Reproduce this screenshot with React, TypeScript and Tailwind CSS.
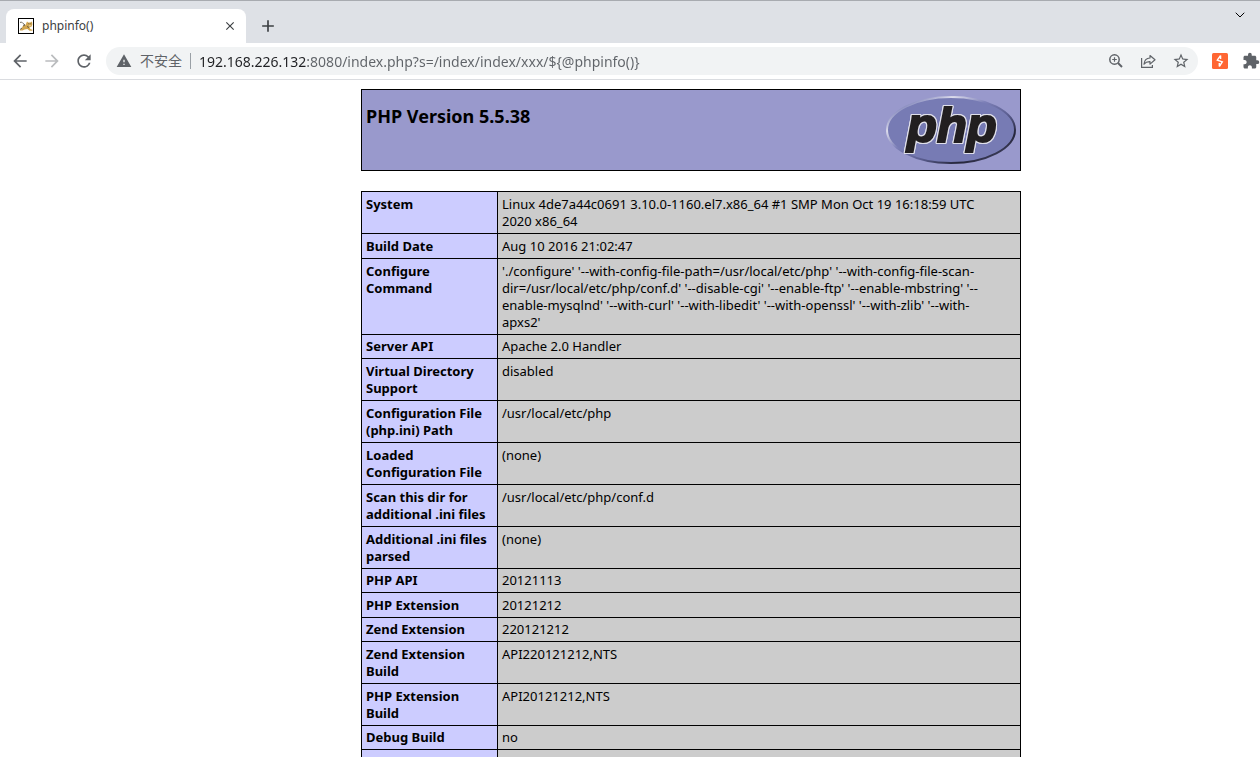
import { useState } from 'react'
import { ChevronDown } from 'lucide-react'
import {
  MdAdd, MdArrowBack, MdArrowForward, MdClose,
  MdExtension, MdRefresh, MdStarBorder, MdWarning,
} from 'react-icons/md'

interface InfoRow {
  name: string
  value: string
  compact?: boolean
}

const ROWS: InfoRow[] = [
  { name: 'System', value: 'Linux 4de7a44c0691 3.10.0-1160.el7.x86_64 #1 SMP Mon Oct 19 16:18:59 UTC\n2020 x86_64' },
  { name: 'Build Date', value: 'Aug 10 2016 21:02:47' },
  {
    name: 'Configure Command',
    value:
      "'./configure' '--with-config-file-path=/usr/local/etc/php' '--with-config-file-scan-\ndir=/usr/local/etc/php/conf.d' '--disable-cgi' '--enable-ftp' '--enable-mbstring' '--\nenable-mysqlnd' '--with-curl' '--with-libedit' '--with-openssl' '--with-zlib' '--with-\napxs2'",
  },
  { name: 'Server API', value: 'Apache 2.0 Handler', compact: true },
  { name: 'Virtual Directory Support', value: 'disabled' },
  { name: 'Configuration File (php.ini) Path', value: '/usr/local/etc/php' },
  { name: 'Loaded Configuration File', value: '(none)' },
  { name: 'Scan this dir for additional .ini files', value: '/usr/local/etc/php/conf.d' },
  { name: 'Additional .ini files parsed', value: '(none)' },
  { name: 'PHP API', value: '20121113', compact: true },
  { name: 'PHP Extension', value: '20121212' },
  { name: 'Zend Extension', value: '220121212', compact: true },
  { name: 'Zend Extension Build', value: 'API220121212,NTS' },
  { name: 'PHP Extension Build', value: 'API20121212,NTS' },
  { name: 'Debug Build', value: 'no', compact: true },
  { name: '', value: '' },
]

function TomcatIcon() {
  return (
    <svg viewBox="0 0 16 16" className="h-4 w-4 shrink-0" aria-hidden="true">
      <rect x="0.5" y="0.5" width="15" height="15" fill="#fff" stroke="#000" />
      <path d="M9 3.500l1.200 1h2L14 3.500l.4 3-1 2.300-2 .8 1 1.400 2 .8v1H11.500l-2-1.800-3 .5L4.500 12.500H1.500l2-2 1.500-2.800L7.500 7z" fill="#d2a650" />
      <path d="M2 4.500l1.500-.5 1.500 1.500L7 7 5 8M2 11.500l2-1.500M9 8.500l2 1" fill="none" stroke="#4a4436" strokeWidth="0.8" />
      <path d="M10.300 5.700h1M12.400 5.700h.8" stroke="#4a4436" strokeWidth="0.7" />
      <path d="M10.800 7.200l2.200.1-1.100 1.200z" fill="#f4e6c4" />
    </svg>
  )
}

function ZoomInIcon() {
  return (
    <svg viewBox="0 0 16 16" className="h-4 w-4" fill="none" stroke="currentColor" aria-hidden="true">
      <circle cx="6.500" cy="6.500" r="4.700" strokeWidth="1.500" />
      <path d="M10 10l4 4" strokeWidth="2" />
      <path d="M4.200 6.500h4.600M6.500 4.200v4.600" strokeWidth="1.200" />
    </svg>
  )
}

function ShareIcon() {
  return (
    <svg viewBox="0 0 16 16" className="h-4 w-4" fill="none" stroke="currentColor" strokeWidth="1.200" aria-hidden="true">
      <path d="M1.600 5v9.400h10.800V12" />
      <path d="M10 2.500l5 4.300-5 4.300V8.700C7.500 8.600 5.500 9.300 4 11.200 4.300 7.800 6.300 5.200 10 5z" strokeLinejoin="round" />
    </svg>
  )
}

function BurpIcon() {
  return (
    <svg viewBox="0 0 16 16" className="h-4 w-4" aria-hidden="true">
      <rect width="16" height="16" rx="1.500" fill="#ff6633" />
      <path d="M8.600 2.500L5.300 7.200l5 1.700-3 4.600M8.600 2.500v3.600M7.300 13.500V10" fill="none" stroke="#fff" strokeWidth="1.400" />
    </svg>
  )
}

function PhpLogo() {
  return (
    <svg viewBox="0 0 130 70" className="h-[70px] w-[130px]" role="img" aria-label="PHP logo">
      <defs>
        <linearGradient id="rim" x1="0" y1="0" x2="1" y2="1">
          <stop offset="0.12" stopColor="#8185bb" />
          <stop offset="0.26" stopColor="#dcdcec" />
          <stop offset="0.42" stopColor="#7d80b8" />
          <stop offset="0.6" stopColor="#5c5f92" />
          <stop offset="0.78" stopColor="#25253a" />
          <stop offset="1" stopColor="#55587f" />
        </linearGradient>
      </defs>
      <ellipse cx="65" cy="35" rx="64" ry="33" fill="#777bb4" stroke="url(#rim)" strokeWidth="2" />
      <text
        x="21"
        y="47"
        fontSize="49"
        fontWeight="700"
        fontStyle="italic"
        fill="#221f20"
        stroke="#221f20"
        strokeWidth="2"
        className="font-['Liberation_Sans',sans-serif] [filter:drop-shadow(1px_0_0_#dfdfea)_drop-shadow(-1px_0_0_#dfdfea)_drop-shadow(0_1px_0_#dfdfea)_drop-shadow(0_-1px_0_#dfdfea)]"
      >
        php
      </text>
    </svg>
  )
}

export default function App() {
  const [url, setUrl] = useState('192.168.226.132:8080/index.php?s=/index/index/xxx/${@phpinfo()}')

  return (
    <div className="h-screen overflow-hidden bg-white font-['Noto_Sans','Noto_Sans_CJK_SC',sans-serif] text-black">
      {/* Tab strip */}
      <header className="flex h-[43px] items-end border-t border-[#a8abb0] bg-[#dee1e6] pl-1.5 text-[#3c4043]">
        <div className="flex h-[34px] w-60 items-center rounded-t-lg bg-white pr-2 pl-3">
          <TomcatIcon />
          <span className="ml-2 flex-1 text-xs">phpinfo()</span>
          <button type="button" aria-label="Close tab" className="flex h-4 w-4 items-center justify-center">
            <MdClose className="h-3.5 w-3.5" />
          </button>
        </div>
        <button type="button" aria-label="New tab" className="ml-3 flex h-[34px] w-5 items-center justify-center">
          <MdAdd className="h-5 w-5" />
        </button>
        <button type="button" aria-label="Search tabs" className="mr-3 mb-5 ml-auto text-black">
          <ChevronDown className="h-4 w-4" strokeWidth={1.5} />
        </button>
      </header>

      {/* Toolbar */}
      <nav className="flex h-[37px] items-center overflow-hidden border-b border-[#dadce0] pl-2.5 text-[#5f6368]">
        <button type="button" aria-label="Back" className="mr-3 shrink-0">
          <MdArrowBack className="h-5 w-5" />
        </button>
        <button type="button" aria-label="Forward" className="mr-3 shrink-0 text-[#babcbe]">
          <MdArrowForward className="h-5 w-5" />
        </button>
        <button type="button" aria-label="Reload" className="mr-3 shrink-0">
          <MdRefresh className="h-5 w-5" />
        </button>
        <div className="flex h-7 min-w-0 flex-1 items-center rounded-full bg-[#f1f3f4] pr-2 pl-2.5 text-sm">
          <MdWarning className="h-4 w-4 shrink-0" />
          <label htmlFor="address" className="ml-2 shrink-0 border-r border-[#9aa0a6] pr-2 leading-4">
            不安全
          </label>
          <input
            id="address"
            value={url}
            onChange={e => setUrl(e.target.value)}
            className="ml-2 h-6 min-w-0 flex-1 bg-[linear-gradient(90deg,#202124_108px,#5f6368_108px)] bg-clip-text text-transparent caret-black outline-none"
          />
          <div className="flex shrink-0 items-center gap-4">
            <button type="button" aria-label="Zoom">
              <ZoomInIcon />
            </button>
            <button type="button" aria-label="Share">
              <ShareIcon />
            </button>
            <button type="button" aria-label="Bookmark">
              <MdStarBorder className="h-[18px] w-[18px]" />
            </button>
          </div>
        </div>
        <button type="button" aria-label="Burp Suite" className="ml-3.5 shrink-0">
          <BurpIcon />
        </button>
        <button type="button" aria-label="Extensions" className="ml-3.5 shrink-0">
          <MdExtension className="h-[18px] w-[18px]" />
        </button>
      </nav>

      <main className="pt-[9px] pl-[122px]">
        <div className="mx-auto max-w-[660px]">
          <div className="mb-5 flex h-[82px] items-start justify-between border border-black bg-[#9999cc] px-1 pt-[5px]">
            <h1 className="pt-2.5 text-lg leading-[22px] font-bold">PHP Version 5.5.38</h1>
            <PhpLogo />
          </div>

          <table className="w-full table-fixed border-collapse text-[13px] leading-[17px]">
            <colgroup>
              <col className="w-[136px]" />
              <col />
            </colgroup>
            <tbody>
              {ROWS.map(row => {
                const pad = row.compact ? 'pt-[3px] pb-[3px]' : 'pt-[4px] pb-[3px]'
                return (
                  <tr key={row.name} className="h-6">
                    <th scope="row" className={`border border-black bg-[#ccccff] px-1 text-left align-top font-bold ${pad}`}>
                      {row.name}
                    </th>
                    <td className={`border border-black bg-[#cccccc] px-1 align-top whitespace-pre-line ${pad}`}>{row.value}</td>
                  </tr>
                )
              })}
            </tbody>
          </table>
        </div>
      </main>
    </div>
  )
}
